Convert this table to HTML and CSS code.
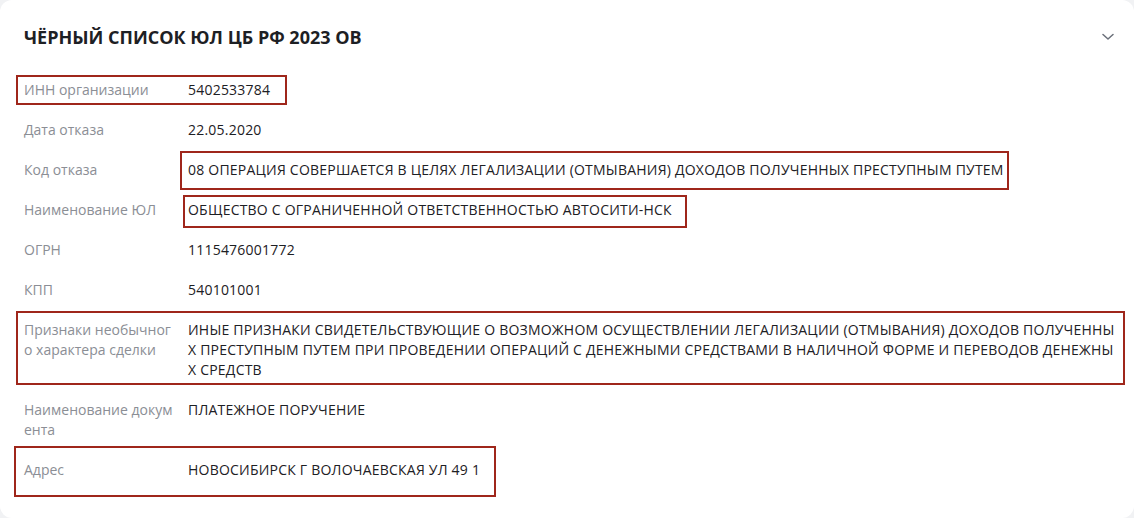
FILE: index.html
```html
<!DOCTYPE html>
<html lang="ru">
<head>
<meta charset="utf-8">
<title>Чёрный список ЮЛ ЦБ РФ 2023 ОВ</title>
<link rel="stylesheet" href="styles.css">
</head>
<body>
<div class="card">
  <div class="card-header">
    <h2 class="card-title">ЧЁРНЫЙ СПИСОК ЮЛ ЦБ РФ 2023 ОВ</h2>
    <svg class="chevron" width="12" height="8" viewBox="0 0 12 8"><path d="M1 1.5 L6 6 L11 1.5" fill="none" stroke="#6b707a" stroke-width="1.5" stroke-linecap="round" stroke-linejoin="round"/></svg>
  </div>
  <div class="rows">
    <div class="row"><div class="label">ИНН организации</div><div class="value">5402533784</div></div>
    <div class="row"><div class="label">Дата отказа</div><div class="value">22.05.2020</div></div>
    <div class="row"><div class="label">Код отказа</div><div class="value">08 ОПЕРАЦИЯ СОВЕРШАЕТСЯ В ЦЕЛЯХ ЛЕГАЛИЗАЦИИ (ОТМЫВАНИЯ) ДОХОДОВ ПОЛУЧЕННЫХ ПРЕСТУПНЫМ ПУТЕМ</div></div>
    <div class="row"><div class="label">Наименование ЮЛ</div><div class="value">ОБЩЕСТВО С ОГРАНИЧЕННОЙ ОТВЕТСТВЕННОСТЬЮ АВТОСИТИ-НСК</div></div>
    <div class="row"><div class="label">ОГРН</div><div class="value">1115476001772</div></div>
    <div class="row"><div class="label">КПП</div><div class="value">540101001</div></div>
    <div class="row"><div class="label">Признаки необычного характера сделки</div><div class="value">ИНЫЕ ПРИЗНАКИ СВИДЕТЕЛЬСТВУЮЩИЕ О ВОЗМОЖНОМ ОСУЩЕСТВЛЕНИИ ЛЕГАЛИЗАЦИИ (ОТМЫВАНИЯ) ДОХОДОВ ПОЛУЧЕННЫХ ПРЕСТУПНЫМ ПУТЕМ ПРИ ПРОВЕДЕНИИ ОПЕРАЦИЙ С ДЕНЕЖНЫМИ СРЕДСТВАМИ В НАЛИЧНОЙ ФОРМЕ И ПЕРЕВОДОВ ДЕНЕЖНЫХ СРЕДСТВ</div></div>
    <div class="row"><div class="label">Наименование документа</div><div class="value">ПЛАТЕЖНОЕ ПОРУЧЕНИЕ</div></div>
    <div class="row"><div class="label">Адрес</div><div class="value">НОВОСИБИРСК Г ВОЛОЧАЕВСКАЯ УЛ 49 1</div></div>
  </div>
  <div class="mark mark-inn"></div>
  <div class="mark mark-code"></div>
  <div class="mark mark-name"></div>
  <div class="mark mark-signs"></div>
  <div class="mark mark-addr"></div>
</div>
</body>
</html>
```
FILE: styles.css
```css
html, body {
  margin: 0;
  padding: 0;
  background: #f1f2f4;
}
body {
  font-family: "Open Sans", "Liberation Sans", sans-serif;
  -webkit-font-smoothing: antialiased;
}
.card {
  position: relative;
  box-sizing: border-box;
  width: 1134px;
  height: 518px;
  background: #ffffff;
  border-radius: 12px;
  padding: 25px 20px 0 24px;
  overflow: hidden;
}
.card-header {
  display: flex;
  align-items: center;
  justify-content: space-between;
  height: 24px;
  margin-bottom: 31px;
}
.card-title {
  margin: 0;
  font-size: 18px;
  line-height: 24px;
  font-weight: 700;
  color: #1d2024;
}
.rows {
  display: flex;
  flex-direction: column;
  gap: 20px;
  margin-right: -4px;
}
.row {
  display: flex;
  gap: 14px;
  font-size: 14px;
  line-height: 20px;
}
.label {
  flex: 0 0 150px;
  color: #8b8e95;
  word-break: break-all;
}
.value {
  flex: 1 1 auto;
  color: #1d2024;
  letter-spacing: 0.22px;
  word-break: break-all;
}
.mark {
  position: absolute;
  box-sizing: border-box;
  border: 2px solid #9f261b;
}
.mark-inn { left: 16px; top: 75px; width: 271px; height: 30px; }
.mark-code { left: 180px; top: 151px; width: 829px; height: 39px; }
.mark-name { left: 183px; top: 195px; width: 504px; height: 33px; }
.mark-signs { left: 16px; top: 311px; width: 1109px; height: 74px; }
.mark-addr { left: 14px; top: 446px; width: 482px; height: 51px; }
```
